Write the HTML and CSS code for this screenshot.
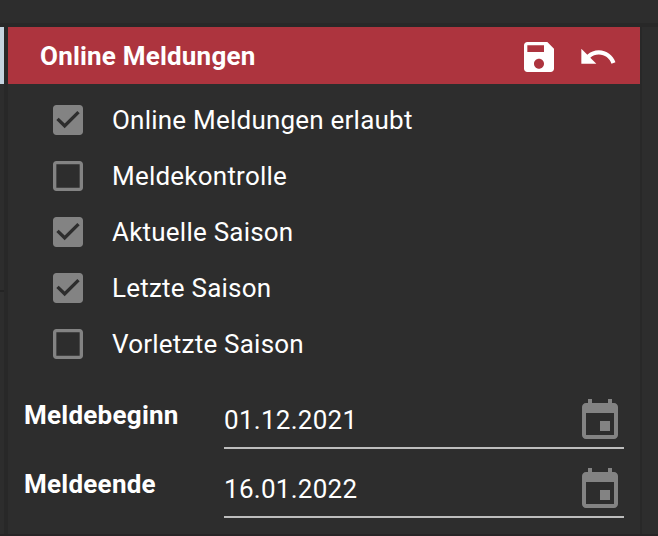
FILE: index.html
```html
<!DOCTYPE html>
<html lang="de">
<head>
    <meta charset="UTF-8">
    <meta name="viewport" content="width=device-width, initial-scale=1.0">
    <title>Online Meldungen</title>
    <link rel="stylesheet" href="styles.css">
</head>
<body>
    <svg class="symbols">
        <symbol id="checked" viewBox="0 0 24 24"><path d="M19 3H5c-1.11 0-2 .9-2 2v14c0 1.1.89 2 2 2h14c1.11 0 2-.9 2-2V5c0-1.1-.89-2-2-2zm-9 14l-5-5 1.41-1.41L10 14.17l7.59-7.59L19 8l-9 9z"/></symbol>
        <symbol id="unchecked" viewBox="0 0 24 24"><path d="M19 5v14H5V5h14m0-2H5c-1.1 0-2 .9-2 2v14c0 1.1.9 2 2 2h14c1.1 0 2-.9 2-2V5c0-1.1-.9-2-2-2z"/></symbol>
        <symbol id="calendar" viewBox="0 0 24 24"><path d="M17 12h-5v5h5v-5zM16 1v2H8V1H6v2H5c-1.11 0-1.99.9-1.99 2L3 19c0 1.1.89 2 2 2h14c1.1 0 2-.9 2-2V5c0-1.1-.9-2-2-2h-1V1h-2zm3 18H5V8h14v11z"/></symbol>
    </svg>
    <div class="top"></div>
    <div class="main">
        <div class="left">
            <div class="left-header"></div>
            <div class="left-card"></div>
        </div>
        <div class="panel">
            <div class="header">
                <h1>Online Meldungen</h1>
                <svg class="icon" viewBox="0 0 24 24"><path d="M17 3H5c-1.11 0-2 .9-2 2v14c0 1.1.89 2 2 2h14c1.1 0 2-.9 2-2V7l-4-4zm-5 16c-1.66 0-3-1.34-3-3s1.34-3 3-3 3 1.34 3 3-1.34 3-3 3zm3-10H5V5h10v4z"/></svg>
                <svg class="icon" viewBox="0 0 24 24"><path d="M12.5 8c-2.65 0-5.05.99-6.9 2.6L2 7v9h9l-3.62-3.62c1.39-1.16 3.16-1.88 5.12-1.88 3.54 0 6.55 2.31 7.6 5.5l2.37-.78C21.08 11.03 17.15 8 12.5 8z"/></svg>
            </div>
            <div class="options">
                <div class="option"><svg class="check"><use href="#checked"/></svg><span>Online Meldungen erlaubt</span></div>
                <div class="option"><svg class="check"><use href="#unchecked"/></svg><span>Meldekontrolle</span></div>
                <div class="option"><svg class="check"><use href="#checked"/></svg><span>Aktuelle Saison</span></div>
                <div class="option"><svg class="check"><use href="#checked"/></svg><span>Letzte Saison</span></div>
                <div class="option"><svg class="check"><use href="#unchecked"/></svg><span>Vorletzte Saison</span></div>
            </div>
            <div class="field">
                <div class="label">Meldebeginn</div>
                <div class="date"><span>01.12.2021</span><svg class="calendar"><use href="#calendar"/></svg></div>
            </div>
            <div class="field">
                <div class="label">Meldeende</div>
                <div class="date"><span>16.01.2022</span><svg class="calendar"><use href="#calendar"/></svg></div>
            </div>
        </div>
        <div class="right"></div>
    </div>
</body>
</html>
```
FILE: styles.css
```css
* {
    box-sizing: border-box;
}
body {
    margin: 0;
    height: 536px;
    overflow: hidden;
    background-color: #2d2d2d;
    color: white;
    font-family: Roboto, sans-serif;
    font-size: 26px;
    line-height: 32px;
}
.symbols {
    display: none;
}
.top {
    height: 27px;
    border-bottom: 4px solid #282828;
}
.main {
    display: flex;
    height: 509px;
    border-bottom: 2px solid #272526;
}
.left {
    width: 8px;
    border-right: 4px solid #282828;
}
.left-header {
    height: 57px;
    background-color: #c5d4e0;
}
.left-card {
    height: 208px;
    border-bottom: 2px solid #242424;
}
.panel {
    width: 632px;
}
.header {
    display: flex;
    align-items: center;
    height: 57px;
    padding: 0 22px 0 32px;
    background-color: #ad343e;
}
h1 {
    flex: 1;
    margin: 0;
    font-size: 26px;
    font-weight: 700;
    letter-spacing: 0.2px;
}
.icon {
    width: 40px;
    height: 40px;
    margin: 3px 0 0 19px;
    fill: white;
}
.options {
    padding: 8px 0 0 40px;
}
.option {
    display: flex;
    align-items: center;
    gap: 24px;
    height: 56px;
    letter-spacing: 0.22px;
}
.check {
    width: 40px;
    height: 40px;
    fill: #838383;
}
.field {
    display: flex;
    height: 69px;
    padding: 0 16px;
}
.label {
    width: 200px;
    padding-top: 27px;
    font-weight: 700;
    letter-spacing: 0.25px;
}
.date {
    display: flex;
    justify-content: space-between;
    width: 400px;
    height: 77px;
    padding-top: 25px;
    border-bottom: 2px solid #bdbdbd;
    letter-spacing: 0.28px;
}
.date span {
    padding-top: 7px;
}
.calendar {
    width: 48px;
    height: 48px;
    fill: #838383;
}
.right {
    flex: 1;
    border-left: 2px solid #282828;
}
```
